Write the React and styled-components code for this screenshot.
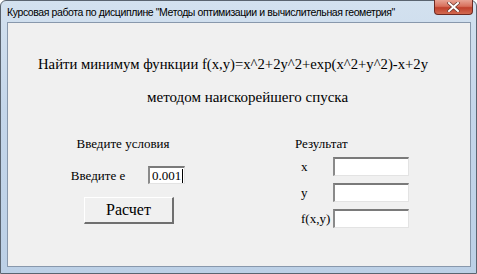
import styled, { createGlobalStyle } from 'styled-components'

const Global = createGlobalStyle`
  html, body {
    margin: 0;
    padding: 0;
    background: #ffffff;
  }
`

const Window = styled.div`
  box-sizing: border-box;
  width: 477px;
  height: 274px;
  display: flex;
  flex-direction: column;
  border: 1px solid #5a6470;
  border-radius: 6px 6px 0 0;
  background: linear-gradient(180deg, #d3e1ef 0%, #c4d6ea 40%, #bcd0e6 100%);
`

const TitleBar = styled.div`
  height: 21px;
  display: flex;
  align-items: flex-start;
  justify-content: space-between;
  padding-left: 6px;
`

const Title = styled.div`
  font-family: "Liberation Sans", Arial, sans-serif;
  font-size: 10.5px;
  letter-spacing: -0.4px;
  color: #000;
  padding-top: 5px;
  white-space: nowrap;
`

const CloseButton = styled.div`
  width: 39px;
  height: 15px;
  flex-shrink: 0;
  margin-right: 3px;
  margin-top: -1px;
  box-sizing: border-box;
  border: 1px solid #6e2a22;
  border-top: none;
  border-radius: 0 0 4px 4px;
  background: linear-gradient(180deg, #e8a394 0%, #d8705c 45%, #c0402c 55%, #d26a50 100%);
  display: flex;
  align-items: center;
  justify-content: center;
`

const Client = styled.div`
  flex: 1;
  margin: 0 5px 6px 6px;
  border: 1px solid #8898ac;
  background: #f0f0f0;
  display: flex;
  flex-direction: column;
  font-family: "Liberation Serif", "Times New Roman", serif;
  color: #000;
`

const Heading = styled.div`
  font-size: ${p => p.$size}px;
  line-height: 18px;
  white-space: nowrap;
  padding-left: ${p => p.$indent}px;
  margin-top: ${p => p.$top}px;
`

const Columns = styled.div`
  display: flex;
  margin-top: 30px;
`

const LeftCol = styled.div`
  width: 240px;
  display: flex;
  flex-direction: column;
  align-items: center;
`

const RightCol = styled.div`
  display: flex;
  flex-direction: column;
  padding-left: 47px;
`

const Caption = styled.div`
  font-size: 13px;
  line-height: 15px;
  margin-right: ${p => p.$shift || 0}px;
`

const InputRow = styled.div`
  display: flex;
  align-items: center;
  gap: 23px;
  margin-top: 15px;
`

const Label = styled.div`
  font-size: 13px;
  line-height: 15px;
`

const Field = styled.div`
  box-sizing: border-box;
  width: ${p => p.$w}px;
  height: ${p => p.$h}px;
  background: #fff;
  border-style: solid;
  border-width: 2px 1px 1px 2px;
  border-color: #7a7a7a #e3e3e3 #e3e3e3 #8a8a8a;
  display: flex;
  align-items: center;
  justify-content: flex-end;
  padding-right: 1px;
  font-size: 13px;
`

const Caret = styled.span`
  display: inline-block;
  width: 1px;
  height: 14px;
  background: #000;
  margin-left: 1px;
`

const Button = styled.div`
  box-sizing: border-box;
  width: 90px;
  height: 27px;
  margin-top: 13px;
  margin-left: 2px;
  border-style: solid;
  border-width: 1px 2px 2px 1px;
  border-color: #ffffff #6f6f6f #6f6f6f #ffffff;
  background: #f0f0f0;
  display: flex;
  align-items: center;
  justify-content: center;
  font-size: 16px;
`

const ResultGrid = styled.div`
  display: grid;
  grid-template-columns: 32px 76px;
  row-gap: 7px;
  margin-top: 6px;
  padding-left: 6px;
  align-items: center;
`

export default function App() {
  return (
    <>
      <Global />
      <Window>
        <TitleBar>
          <Title>Курсовая работа по дисциплине "Методы оптимизации и вычислительная геометрия"</Title>
          <CloseButton>
            <svg width="13" height="10" viewBox="0 0 13 10">
              <path d="M2 1 L11 9 M11 1 L2 9" stroke="#6a3a30" strokeWidth="3.4" strokeLinecap="square" />
              <path d="M2 1 L11 9 M11 1 L2 9" stroke="#ffffff" strokeWidth="2" strokeLinecap="square" />
            </svg>
          </CloseButton>
        </TitleBar>
        <Client>
          <Heading $size={14.7} $indent={30} $top={32}>Найти минимум функции f(x,y)=x^2+2y^2+exp(x^2+y^2)-x+2y</Heading>
          <Heading $size={15} $indent={139} $top={15}>методом наискорейшего спуска</Heading>
          <Columns>
            <LeftCol>
              <Caption $shift={10}>Введите условия</Caption>
              <InputRow>
                <Label>Введите е</Label>
                <Field $w={37} $h={18}>0.001<Caret /></Field>
              </InputRow>
              <Button>Расчет</Button>
            </LeftCol>
            <RightCol>
              <Caption>Результат</Caption>
              <ResultGrid>
                <Label>x</Label>
                <Field $w={76} $h={19} />
                <Label>y</Label>
                <Field $w={76} $h={19} />
                <Label>f(x,y)</Label>
                <Field $w={76} $h={19} />
              </ResultGrid>
            </RightCol>
          </Columns>
        </Client>
      </Window>
    </>
  )
}
